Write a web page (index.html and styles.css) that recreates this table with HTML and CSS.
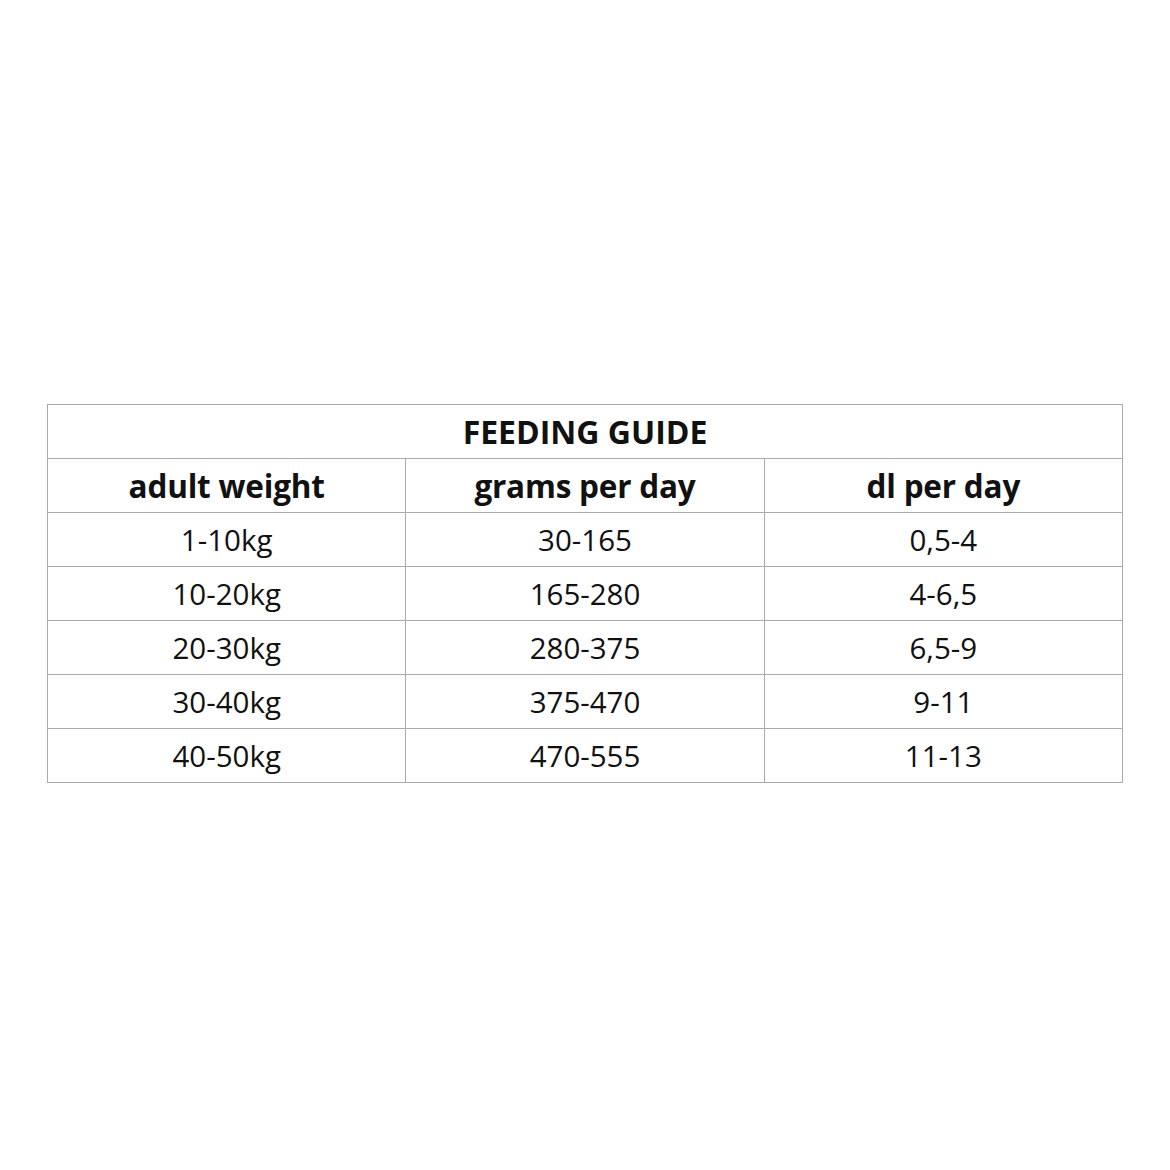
FILE: index.html
```html
<!DOCTYPE html>
<html>
<head>
<meta charset="utf-8">
<link rel="stylesheet" href="styles.css">
</head>
<body>
<div class="page">
<table class="guide">
<tr><th colspan="3" class="title">FEEDING GUIDE</th></tr>
<tr><th>adult weight</th><th>grams per day</th><th>dl per day</th></tr>
<tr><td>1-10kg</td><td>30-165</td><td>0,5-4</td></tr>
<tr><td>10-20kg</td><td>165-280</td><td>4-6,5</td></tr>
<tr><td>20-30kg</td><td>280-375</td><td>6,5-9</td></tr>
<tr><td>30-40kg</td><td>375-470</td><td>9-11</td></tr>
<tr><td>40-50kg</td><td>470-555</td><td>11-13</td></tr>
</table>
</div>
</body>
</html>
```
FILE: styles.css
```css
html, body { margin: 0; padding: 0; background: #fff; }
.page { padding: 404px 47px 0 47px; width: 1076px; }
.guide {
  border-collapse: collapse;
  width: 1076px;
  table-layout: fixed;
  font-family: "Open Sans", "Liberation Sans", sans-serif;
  color: #111;
}
.guide th, .guide td {
  border: 1px solid #aaa;
  height: 53px;
  padding: 0;
  text-align: center;
  vertical-align: middle;
  line-height: 1;
}
.guide th { font-size: 31.5px; font-weight: 700; letter-spacing: -0.2px; }
.guide td { font-size: 29.5px; font-weight: 400; }
.guide .title { font-size: 32px; letter-spacing: 0; }
```
